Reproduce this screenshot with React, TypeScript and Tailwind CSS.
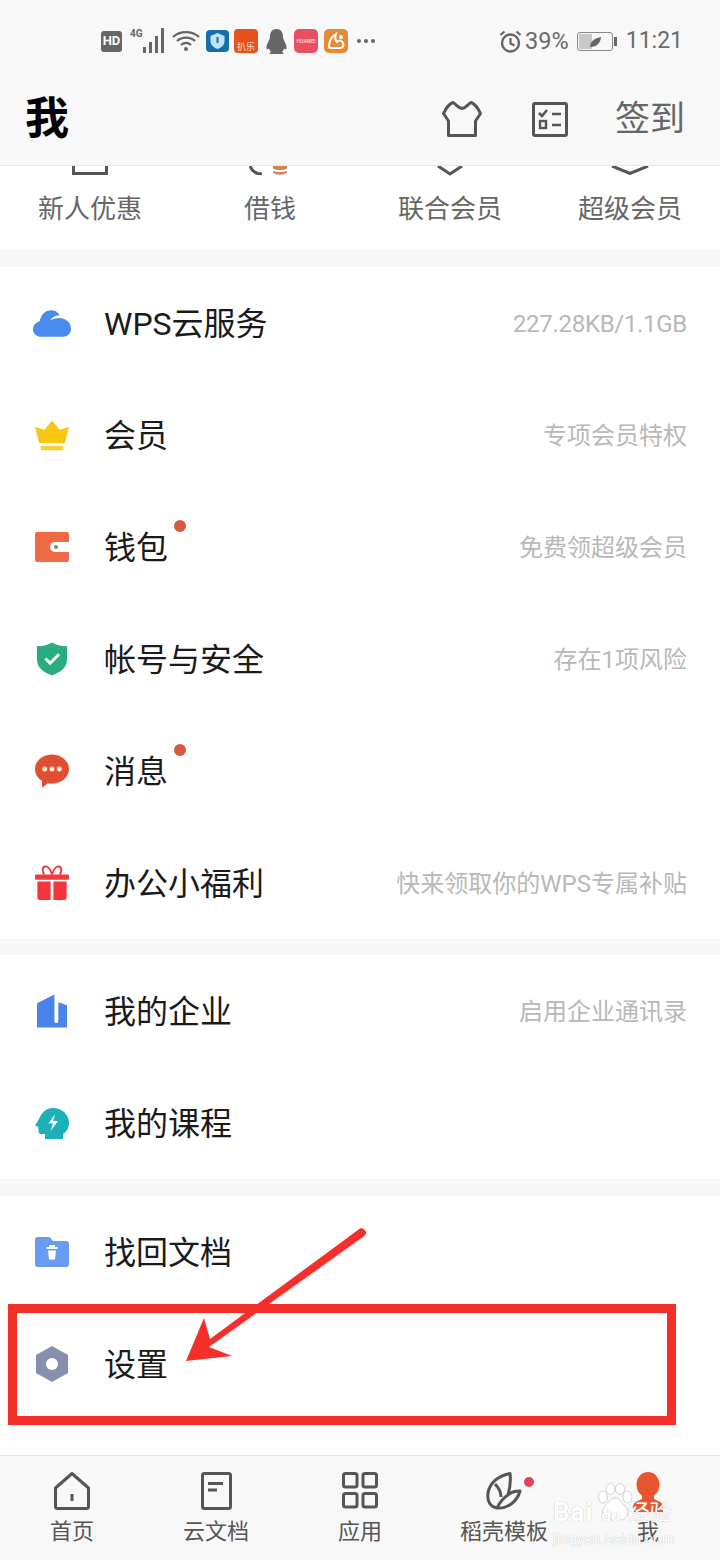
import React from "react";

type RowData = {
  icon: React.ReactNode;
  title: string;
  hint?: string;
  dot?: boolean;
};

const CloudIcon = () => (
  <svg width="38" height="27" viewBox="0 0 40 28">
    <path d="M9 28C3.500 28 0 24.500 0 20c0-4 3-7.400 7-8C8 5 13 0 19 0c4 0 7.500 2 9 5.200-4.500.3-8 2.200-10.400 6 3-2 6.500-3 10-3C35 8.200 40 13.500 40 19.500 40 24.500 36 28 31 28H9z" fill="#4a8bee" />
  </svg>
);

const CrownIcon = () => (
  <svg width="34" height="31" viewBox="0 0 36 32">
    <path d="M18 0l8 10 10-3-4.500 17h-27L0 7l10 3z" fill="#f8c612" />
    <rect x="6" y="27" width="24" height="4.500" rx="1" fill="#f8cf3a" />
  </svg>
);

const WalletIcon = () => (
  <svg width="34" height="30" viewBox="0 0 34 30">
    <path d="M2 0h30a2 2 0 0 1 2 2v8H20a5 5 0 0 0 0 10h14v8a2 2 0 0 1-2 2H2a2 2 0 0 1-2-2V2a2 2 0 0 1 2-2z" fill="#ef6a45" />
    <circle cx="21" cy="15" r="2" fill="#7c8a80" />
  </svg>
);

const ShieldIcon = () => (
  <svg width="30" height="34" viewBox="0 0 32 35">
    <path d="M16 0c4 2.500 9 4 16 4v14c0 8-6 13.500-16 17C6 31.500 0 26 0 18V4c7 0 12-1.500 16-4z" fill="#28ad7c" />
    <path d="M9 17l5 5 9.500-9.500" fill="none" stroke="#fff" strokeWidth="3.200" />
  </svg>
);

const ChatIcon = () => (
  <svg width="34" height="35" viewBox="0 0 35 35">
    <path d="M17.500 0C27 0 35 6.500 35 15s-8 15-17.500 15c-1.500 0-3-.2-4.500-.5L7.500 34.500 7 27C2.800 24.500 0 20 0 15 0 6.500 8 0 17.500 0z" fill="#e14f32" />
    <circle cx="10" cy="15" r="2.600" fill="#fbe6d4" />
    <circle cx="17.500" cy="15" r="2.600" fill="#fbe6d4" />
    <circle cx="25" cy="15" r="2.600" fill="#fbe6d4" />
  </svg>
);

const GiftIcon = () => (
  <svg width="34" height="36" viewBox="0 0 36 36">
    <path d="M18 9C16 3 13 0 10.500 0.500 7.500 1.200 7.500 6 10 9M18 9c2-6 5-9 7.500-8.500C28.500 1.200 28.500 6 26 9" fill="none" stroke="#ee3a3f" strokeWidth="2" />
    <rect x="0" y="9" width="36" height="5.500" rx="1" fill="#ee3a3f" />
    <path d="M2.500 16.500H16.500V36H5a2.500 2.500 0 0 1-2.500-2.500zM19.500 16.500H33.500v17A2.500 2.500 0 0 1 31 36H19.500z" fill="#f4353b" />
  </svg>
);

const BuildingIcon = () => (
  <svg width="30" height="34" viewBox="0 0 31 34">
    <path d="M0 9L18 0v27.500a2 2 0 0 0 4 0V8l9 3v23H0z" fill="#4a84e8" />
  </svg>
);

const HeadIcon = () => (
  <svg width="34" height="31" viewBox="0 0 34 31">
    <path d="M18 0c9 0 16 6.500 16 15 0 5-2.500 9-6 11v5H10v-5H6c-1.500 0-2.500-1-2.500-2.500V19L0 17.500 4 11C6.500 4.500 11.500 0 18 0z" fill="#1db0b8" />
    <path d="M20 6l-6.500 9.500H18L15.500 23 23 13h-4.800z" fill="#fff" />
  </svg>
);

const FolderIcon = () => (
  <svg width="34" height="30" viewBox="0 0 34 30">
    <path d="M3 0h10c1.500 0 2.500.6 3.200 1.700L18 4h13a3 3 0 0 1 3 3v20a3 3 0 0 1-3 3H3a3 3 0 0 1-3-3V3a3 3 0 0 1 3-3z" fill="#6a9bf2" />
    <path d="M11.500 11h11M15 11V9h4v2" fill="none" stroke="#fff" strokeWidth="1.800" />
    <path d="M13 13.500h8l-1 9h-6z" fill="#fff" />
  </svg>
);

const NutIcon = () => (
  <svg width="32" height="36" viewBox="0 0 32 36">
    <path d="M16 0l16 9v18l-16 9-16-9V9z" fill="#8690ae" />
    <circle cx="16" cy="18" r="6" fill="#fff" />
  </svg>
);

const groups: RowData[][] = [
  [
    { icon: <CloudIcon />, title: "WPS云服务", hint: "227.28KB/1.1GB" },
    { icon: <CrownIcon />, title: "会员", hint: "专项会员特权" },
    { icon: <WalletIcon />, title: "钱包", hint: "免费领超级会员", dot: true },
    { icon: <ShieldIcon />, title: "帐号与安全", hint: "存在1项风险" },
    { icon: <ChatIcon />, title: "消息", dot: true },
    { icon: <GiftIcon />, title: "办公小福利", hint: "快来领取你的WPS专属补贴" },
  ],
  [
    { icon: <BuildingIcon />, title: "我的企业", hint: "启用企业通讯录" },
    { icon: <HeadIcon />, title: "我的课程" },
  ],
  [
    { icon: <FolderIcon />, title: "找回文档" },
    { icon: <NutIcon />, title: "设置" },
  ],
];

function Row({ icon, title, hint, dot }: RowData) {
  return (
    <div className="flex h-[112px] items-center pl-[32px] pr-[33px]">
      <div className="flex w-[40px] justify-center">{icon}</div>
      <div className="relative ml-[32px] pt-[2px] text-[32px] leading-[40px] text-[#1a1a1a]">
        {title}
        {dot && <span className="absolute left-full top-[-6px] ml-[6px] h-[12px] w-[12px] rounded-full bg-[#d9593b]" />}
      </div>
      {hint && (
        <div className={`ml-auto pt-[2px] text-[24px] text-[#b8b8b8] ${title.startsWith("WPS") ? "tracking-[-0.3px]" : ""}`}>
          {hint}
        </div>
      )}
    </div>
  );
}

function StatusBar() {
  return (
    <div className="flex h-[80px] items-center pl-[101px] pr-[37px] pt-[2px] text-[#6b6b6b]">
      <div className="flex h-[21px] w-[21px] items-center justify-center rounded-[3px] bg-[#666] text-[13px] font-bold text-white">HD</div>
      <svg className="ml-[8px]" width="36" height="26" viewBox="0 0 36 26">
        <text x="0" y="9" fontSize="10" fontWeight="700" fill="#666">4G</text>
        <path d="M13 19h3v6h-3zM19 14h3v11h-3zM25 8h3v17h-3zM31 0h3v25h-3z" fill="#666" />
      </svg>
      <svg className="ml-[6px]" width="28" height="22" viewBox="0 0 28 22">
        <path d="M1 7c7-6.500 19-6.500 26 0M5 11c5-4.500 13-4.500 18 0M9 15c3-2.500 7-2.500 10 0" fill="none" stroke="#666" strokeWidth="2.200" />
        <circle cx="14" cy="19" r="2" fill="#666" />
      </svg>
      <svg className="ml-[6px]" width="23" height="22" viewBox="0 0 23 22">
        <rect width="23" height="22" rx="4" fill="#1470ab" />
        <path d="M11.500 3l7 3v5c0 4-3 6.500-7 8-4-1.500-7-4-7-8V6z" fill="#bfe3f5" />
        <path d="M11.500 7v6" stroke="#1470ab" strokeWidth="2" />
      </svg>
      <div className="ml-[5px] flex h-[24px] w-[24px] items-end justify-center rounded-[4px] bg-[#e9511c] text-[9px] leading-[12px] text-[#fde2c8]">扒乐</div>
      <svg className="ml-[8px]" width="21" height="25" viewBox="0 0 21 25">
        <path d="M10.500 0C15 0 17 3.500 17 8c0 2 1.500 4 3 7.500 1 3 .5 5-.5 5l-1.500-1c-.5 1.500-1 2.500-2 3.500 1 .5 1.500 1 1.500 2H3.500c0-1 .5-1.500 1.500-2-1-1-1.500-2-2-3.500l-1.500 1c-1 0-1.500-2-.5-5C2.500 12 4 10 4 8c0-4.500 2-8 6.500-8z" fill="#666" />
      </svg>
      <div className="ml-[7px] flex h-[24px] w-[24px] items-center justify-center rounded-[5px] bg-[#e8505f] text-[5px] leading-[6px] text-white">HUAWEI</div>
      <svg className="ml-[6px]" width="24" height="24" viewBox="0 0 24 24">
        <rect width="24" height="24" rx="5" fill="#e58a35" />
        <path d="M5 18c0-6 2-10 7-13-1 3-1 6 1 8 2-2 5-2 6 1 1 2 0 5-3 5H8c-2 0-3 0-3-1z" fill="none" stroke="#fff" strokeWidth="2" />
        <circle cx="17" cy="8" r="2" fill="#fff" />
      </svg>
      <div className="ml-[9px] flex gap-[3px]">
        <span className="h-[4px] w-[4px] rounded-full bg-[#666]" />
        <span className="h-[4px] w-[4px] rounded-full bg-[#666]" />
        <span className="h-[4px] w-[4px] rounded-full bg-[#666]" />
      </div>
      <svg className="ml-auto" width="23" height="23" viewBox="0 0 23 23">
        <circle cx="11.500" cy="13" r="8.500" fill="none" stroke="#666" strokeWidth="2.400" />
        <path d="M11.500 8v5.500l4 2M1.500 5l4-3.500M21.500 5l-4-3.500" fill="none" stroke="#666" strokeWidth="2.200" />
      </svg>
      <span className="ml-[3px] text-[23.500px] leading-[28px]">39%</span>
      <svg className="ml-[8px]" width="40" height="19" viewBox="0 0 40 19">
        <rect x=".5" y=".5" width="35" height="18" rx="2.500" fill="none" stroke="#8a8a8a" />
        <rect x="2" y="2" width="13" height="15" fill="#c8c8c8" />
        <path d="M37 5h3v9h-3z" fill="#666" />
        <path d="M13 15c0-6 5-9 11-10-.5 6-4 10-11 10z" fill="#666" />
      </svg>
      <span className="ml-[9px] text-[23px] leading-[28px]">11:21</span>
    </div>
  );
}

const navItems = [
  {
    label: "首页",
    icon: (
      <svg width="36" height="38" viewBox="0 0 36 38">
        <path d="M18 1.500L34.500 16v18.500a2 2 0 0 1-2 2h-29a2 2 0 0 1-2-2V16z" fill="none" stroke="#555" strokeWidth="3" strokeLinejoin="round" />
        <path d="M18 22v7" stroke="#555" strokeWidth="3" />
      </svg>
    ),
  },
  {
    label: "云文档",
    icon: (
      <svg width="31" height="38" viewBox="0 0 31 38">
        <rect x="1.500" y="1.500" width="28" height="35" rx="2" fill="none" stroke="#555" strokeWidth="3" />
        <path d="M7 11.500h15M7 18h9" stroke="#555" strokeWidth="3" />
      </svg>
    ),
  },
  {
    label: "应用",
    icon: (
      <svg width="36" height="37" viewBox="0 0 36 37">
        <rect x="1.500" y="1.500" width="13.500" height="13.500" rx="2" fill="none" stroke="#555" strokeWidth="3" />
        <rect x="21" y="1.500" width="13.500" height="13.500" rx="2" fill="none" stroke="#555" strokeWidth="3" />
        <rect x="1.500" y="21.500" width="13.500" height="13.500" rx="2" fill="none" stroke="#555" strokeWidth="3" />
        <rect x="21" y="21.500" width="13.500" height="13.500" rx="2" fill="none" stroke="#555" strokeWidth="3" />
      </svg>
    ),
  },
  {
    label: "稻壳模板",
    icon: (
      <div className="relative h-[38px] w-[36px]">
        <svg width="36" height="38" viewBox="0 0 36 38">
          <path d="M24 1.500C13 4 4 10 2 21c-1 8 2 14 9 15 10 1 20-6 23-17-5 0-9 1-12 4 2-7 3-14 2-21.500zM9 12c4 4 6 8 6 13M11 36c3-6 6-10 11-13" fill="none" stroke="#555" strokeWidth="3" strokeLinejoin="round" />
        </svg>
        <span className="absolute left-[38px] top-[5px] h-[10px] w-[10px] rounded-full bg-[#e5405a]" />
      </div>
    ),
  },
  {
    label: "我",
    icon: (
      <svg width="30" height="40" viewBox="0 0 30 40">
        <path d="M15 0c6.500 0 11.500 5.500 11.500 12.500 0 5-2 8.500-5.500 11V27c3 1.500 8 3 9 6.500V40H0v-6.500C1 30 6 28.500 9 27v-3.500C5.500 21 3.500 17.500 3.500 12.500 3.500 5.500 8.500 0 15 0z" fill="#e9552f" />
      </svg>
    ),
  },
];

export default function App() {
  return (
    <div className="relative h-[1560px] w-[720px] overflow-hidden bg-white font-['Roboto','Noto_Sans_CJK_SC',sans-serif]">
      <div className="border-b border-[#e8e8e8] bg-[#f8f8f8]">
        <StatusBar />
        <div className="flex h-[85px] items-center pb-[7px] pl-[25px] pr-[35px]">
          <div className="text-[44px] font-bold leading-none text-black">我</div>
          <svg className="ml-auto" width="40" height="36" viewBox="0 0 40 36">
            <path d="M11 1.500C14 3 16 7 20 7.500 24 7 26 3 29 1.500c4 1.500 7 5.500 9.500 11L33.500 20V34.500H6.500V20L1.500 12.500C4 7 7 3 11 1.500z" fill="none" stroke="#555" strokeWidth="3" strokeLinejoin="round" />
          </svg>
          <svg className="ml-[50px]" width="36" height="35" viewBox="0 0 36 35">
            <rect x="1.500" y="1.500" width="33" height="32" rx="1.500" fill="none" stroke="#555" strokeWidth="3" />
            <path d="M7 11l3 3 5-6M20 12h9M20 23h9" fill="none" stroke="#555" strokeWidth="2.600" />
            <rect x="8" y="19" width="6" height="7" fill="none" stroke="#555" strokeWidth="2.400" />
          </svg>
          <div className="ml-[47px] text-[35px] leading-none text-[#666]">签到</div>
        </div>
      </div>

      <div className="grid h-[84px] grid-cols-4 text-center text-[26px] text-[#666]">
        <div className="flex flex-col items-center">
          <svg width="36" height="9" viewBox="0 0 36 9">
            <path d="M1.500 0v7.500h33V0" fill="none" stroke="#555" strokeWidth="3" />
          </svg>
          <div className="mt-[16px] leading-[36px]">新人优惠</div>
        </div>
        <div className="flex flex-col items-center">
          <svg width="42" height="9" viewBox="0 0 42 9">
            <path d="M1 0c2 5 6 8 12 8" fill="none" stroke="#555" strokeWidth="3" />
            <path d="M24 0h14v2.500c-4 2-10 2-14 0zM24 5c4 1.500 10 1.500 14 0v1.500c-3 3-11 3-14 0z" fill="#d9824f" />
          </svg>
          <div className="mt-[16px] leading-[36px]">借钱</div>
        </div>
        <div className="flex flex-col items-center">
          <svg width="26" height="10" viewBox="0 0 26 10">
            <path d="M1 0l12 8 12-8" fill="none" stroke="#555" strokeWidth="3" />
          </svg>
          <div className="mt-[15px] leading-[36px]">联合会员</div>
        </div>
        <div className="flex flex-col items-center">
          <svg width="38" height="9" viewBox="0 0 38 9">
            <path d="M1 0l18 7.500L37 0" fill="none" stroke="#555" strokeWidth="3" />
          </svg>
          <div className="mt-[16px] leading-[36px]">超级会员</div>
        </div>
      </div>

      <div className="flex flex-col bg-[#f7f7f7] pt-[17px]">
        {groups.map((rows, i) => (
          <div key={rows[0].title} className={`bg-white ${i === 1 ? "mt-[16px]" : i === 2 ? "mt-[17px]" : ""}`}>
            {rows.map((row) => (
              <Row key={row.title} {...row} />
            ))}
          </div>
        ))}
      </div>

      <div className="absolute bottom-0 left-0 grid h-[105px] w-full grid-cols-5 border-t border-[#e4e4e4] bg-[#f8f8f8] pt-[16px]">
        {navItems.map((item) => (
          <div key={item.label} className="flex flex-col items-center">
            <div className="flex h-[38px] items-start">{item.icon}</div>
            <div className="mt-[7px] text-[22px] leading-[30px] text-[#555]">{item.label}</div>
          </div>
        ))}
      </div>

      {/* red annotation over the settings row */}
      <div className="absolute left-[8px] top-[1304px] h-[121px] w-[668px] border-[9px] border-[#f5302a]" />
      <svg className="absolute left-0 top-0" width="720" height="1560" viewBox="0 0 720 1560">
        <path d="M360 1228.500a4.500 4.500 0 0 1 5 7L209 1347l23 9-46 5 18-43 6 21z" fill="#f5302a" />
      </svg>

      {/* baidu watermark */}
      <svg className="absolute left-[597px] top-[1483px]" width="36" height="40" viewBox="0 0 36 40">
        <g fill="#fff" stroke="#d4d4d4" strokeWidth="1">
          <ellipse cx="6" cy="14" rx="4.500" ry="6" />
          <ellipse cx="13.500" cy="6" rx="4.500" ry="5.500" />
          <ellipse cx="23" cy="6" rx="4.500" ry="5.500" />
          <ellipse cx="30.500" cy="14" rx="4.500" ry="6" />
          <path d="M18 15c5 0 6 5 10 8 4 4 4 14-5 14-2 0-3-1-5-1s-3 1-5 1c-9 0-9-10-5-14 4-3 5-8 10-8z" />
        </g>
      </svg>
      <div className="absolute left-[553px] top-[1497px] w-[130px] text-white [text-shadow:0_0_1px_#a8a8a8]">
        <div className="flex h-[30px] items-end">
          <span className="text-[26px] font-bold leading-[30px] tracking-[1px]">Bai</span>
          <span className="ml-[8px] text-[17px] font-bold leading-[24px]">du</span>
          <span className="ml-[7px] text-[22px] leading-[28px]">经验</span>
        </div>
        <div className="mt-[4px] text-[15px] leading-[16px]">jingyan.baidu.com</div>
      </div>
    </div>
  );
}
